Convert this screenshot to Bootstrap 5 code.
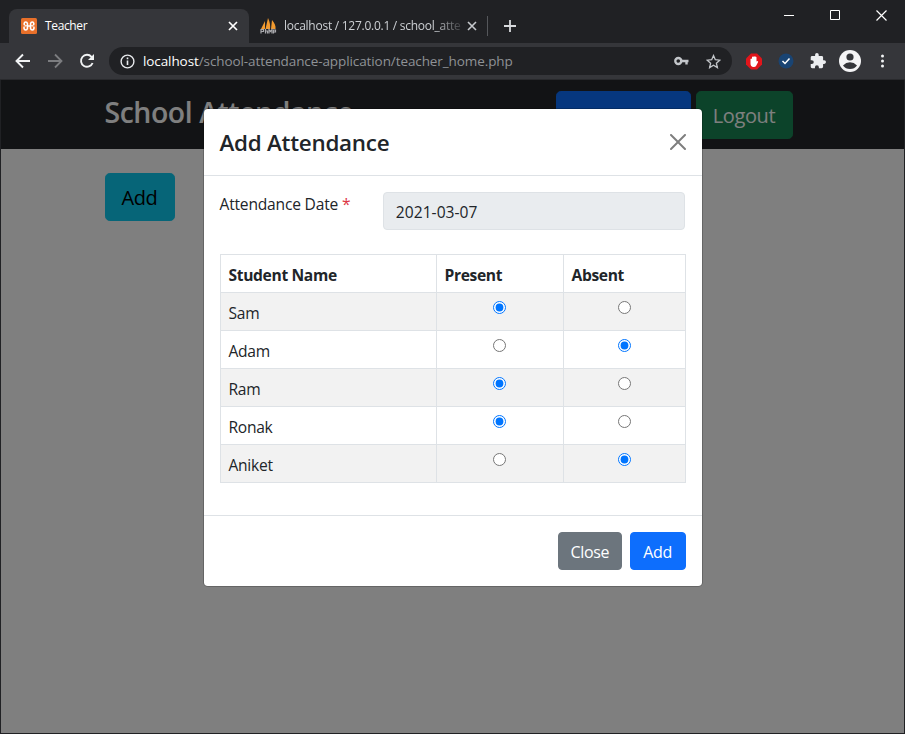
<!DOCTYPE html>
<html lang="en">
<head>
<meta charset="utf-8">
<title>Teacher</title>
<link href="https://cdn.jsdelivr.net/npm/bootstrap@5.3.0/dist/css/bootstrap.min.css" rel="stylesheet">
<style>
body{font-family:"Open Sans","Noto Sans",sans-serif;font-size:16px;width:905px;height:734px;overflow:hidden;background:#202124;letter-spacing:-.025em}
svg{display:block;flex:none}
.tabstrip{height:43px;background:#202124;font-size:12px;letter-spacing:-.03em;padding-left:9px}
.tab-on{width:240px;height:34px;background:#35363a;border-radius:8px 8px 0 0;color:#fff;padding:0 10px 0 12px}
.tab-off{width:238px;height:34px;color:#cdd0d4;padding:0 9px 0 11px}
.tab-label{white-space:nowrap;margin-left:8px}
.tab-off .tab-label{width:177px;overflow:hidden;font-size:12px;letter-spacing:-.022em;margin-left:7px;-webkit-mask-image:linear-gradient(90deg,#000 150px,transparent 182px);mask-image:linear-gradient(90deg,#000 150px,transparent 182px)}
.winctl{padding:10px 18px 0 0;gap:35px}
.toolbar{height:37px;background:#35363a;padding-left:15px;border-bottom:1px solid #292a2d}
.omni{width:623px;height:28px;border-radius:14px;background:#202124;margin-left:14px;padding:0 11px;font-size:13.5px;color:#8f9296;letter-spacing:-.007em}
.omni b{font-weight:400;color:#fff}
.omni span{margin-left:8px}
.omni .star{margin-left:17px}
.ext-stop{margin:0 15px 0 13px}
.who{margin-left:13px}
.dots{margin-left:19px}
.viewport{height:654px;padding:0 1px 1px;position:relative}
.page{height:653px;background:#fff;overflow:hidden}
.topnav{height:69px;background:#24272b;color:#fff;padding:11px 0 10px}
.shell{width:720px;margin:0 auto;padding:0 20px 0 12px}
.brandname{font-size:28.4px;font-weight:600;line-height:42px;letter-spacing:-.015em}
.btn-lg{height:48px;border-radius:4.8px;font-size:20px;padding:9px 16px 7px;white-space:nowrap;letter-spacing:-.02em}
.btn{letter-spacing:-.02em}
.att-link{width:135px;padding:10px 0 6px;text-align:center}
.out-link{width:97px;margin-left:5px}
.add-btn{width:70px}
.shade{inset:0 1px 1px;background:rgba(0,0,0,.5)}
.modal{inset:0;width:auto;height:auto;overflow:hidden}
.modal-dialog{margin-top:28px}
.modal-content{border-radius:4.8px;border-color:rgba(0,0,0,.2)}
.modal-header{height:67px;padding:18px 16px 16px}
.modal-header .btn-close{margin-top:-10px}
.modal-title{font-size:22.4px;font-weight:600;letter-spacing:-.011em}
.modal-body{height:339px;flex:none;padding:16px}
.modal-footer{height:71px;padding:12px}
.modal-footer .btn{height:38px;border-radius:4px;padding:6px 12px 4px}
.w-close{width:64px}.w-add{width:56px}
.date-label{padding-top:1px;font-size:15.6px;letter-spacing:-.013em}
.form-control[readonly]{height:38px;border-radius:4px;background:#e9ecef;color:#212529;font-size:15.6px;letter-spacing:.002em;padding-top:7px;padding-bottom:5px}
.roster{table-layout:fixed;font-size:15.6px;letter-spacing:-.018em;margin:24px 0 0}
.roster th,.roster td{height:38px;padding:8px 8px 0;line-height:24px}
.roster thead th{vertical-align:top;letter-spacing:-.022em}
.roster tbody td:nth-child(n+2){vertical-align:top;padding-top:8px;text-align:center;line-height:0}
.roster input{width:13px;height:13px;margin:0}
.w-name{width:216px}.w-pres{width:127px}
</style>
<script src="https://cdn.jsdelivr.net/npm/bootstrap@5.3.0/dist/js/bootstrap.bundle.min.js"></script>
</head>
<body>
<div class="tabstrip d-flex align-items-end">
  <div class="tab-on d-flex align-items-center">
    <svg width="16" height="16" viewBox="0 0 16 16"><rect width="16" height="16" rx="1.5" fill="#e8702a"/><path d="M5.800 8H10.200M6 8C7 6.500 6.500 4 4.800 4C2.800 4 2.600 7 4.200 7.800C2.300 8.600 2.600 12 4.800 12C6.500 12 7 9.500 6 8M10 8C9 6.500 9.500 4 11.200 4C13.200 4 13.400 7 11.800 7.800C13.700 8.600 13.400 12 11.200 12C9.500 12 9 9.500 10 8" fill="none" stroke="#fff" stroke-width="1.600"/><path d="M1.500 8H4.300M11.700 8H14.500" stroke="#e8702a" stroke-width="1.100"/></svg>
    <span class="tab-label">Teacher</span>
    <svg class="ms-auto" width="12" height="12" viewBox="0 0 12 12"><path d="M2 2L10 10M10 2L2 10" stroke="#fff" stroke-width="1.7"/></svg>
  </div>
  <div class="tab-off d-flex align-items-center">
    <svg width="17" height="16" viewBox="0 0 17 16"><path d="M1 11L5 3V11ZM5.500 11L8 0C10 4 10.500 8 10 11ZM11 11L12 2C14.500 5 16 8 15.500 11Z" fill="#f29a2e"/><path d="M1 15.500V11.500H3.500V13.500H1M5.500 11V15.500M5.500 13H7.500V15.500M9 15.500V11.500L10.500 13.500L12 11.500V15.500M13.500 15.500V12H15.500V14H13.500" fill="none" stroke="#a9a9ad" stroke-width="1.200"/></svg>
    <span class="tab-label">localhost / 127.0.0.1 / school_atte</span>
    <svg class="ms-auto" width="12" height="12" viewBox="0 0 12 12"><path d="M2 2L10 10M10 2L2 10" stroke="#c6c9cd" stroke-width="1.600"/></svg>
  </div>
  <svg width="34" height="34" viewBox="0 0 34 34"><path d="M.5 7V27" stroke="#55575b"/><path d="M17 17H29M23 11V23" stroke="#d8dadd" stroke-width="1.800"/></svg>
  <div class="winctl d-flex align-self-start ms-auto">
    <svg width="11" height="11" viewBox="0 0 11 11"><path d="M0 5.500H10" stroke="#fff"/></svg>
    <svg width="11" height="11" viewBox="0 0 11 11"><path d="M.5 .5H9.500V9.500H.5Z" fill="none" stroke="#fff"/></svg>
    <svg width="11" height="11" viewBox="0 0 11 11"><path d="M.5 .5L10.500 10.500M10.500 .5L.5 10.500" stroke="#fff" stroke-width="1.200"/></svg>
  </div>
</div>
<div class="toolbar d-flex align-items-center">
  <svg width="16" height="16" viewBox="0 0 16 16"><path d="M15 8H2M8 1.500L1.500 8L8 14.500" fill="none" stroke="#f1f3f4" stroke-width="1.900"/></svg>
  <svg class="ms-3" width="16" height="16" viewBox="0 0 16 16"><path d="M1 8H14M8 1.500L14.500 8L8 14.500" fill="none" stroke="#7c7d80" stroke-width="1.800"/></svg>
  <svg class="ms-3" width="16" height="16" viewBox="0 0 16 16"><path d="M13.600 10A6 6 0 1 1 12.500 3.800L14 5.300" fill="none" stroke="#f1f3f4" stroke-width="1.900"/><path d="M15 1V7H9Z" fill="#f1f3f4"/></svg>
  <div class="omni d-flex align-items-center">
    <svg width="15" height="15" viewBox="0 0 15 15"><circle cx="7.500" cy="7.500" r="6.400" fill="none" stroke="#e8eaed" stroke-width="1.400"/><path d="M7.500 6.500V11M7.500 3.600V5.200" stroke="#e8eaed" stroke-width="1.600"/></svg>
    <span><b>localhost</b>/school-attendance-application/teacher_home.php</span>
    <svg class="ms-auto" width="15" height="10" viewBox="0 0 15 10"><circle cx="4.300" cy="5" r="3" fill="none" stroke="#c3c6ca" stroke-width="2.400"/><path d="M7.500 5H14.500M12.500 5V8.500" fill="none" stroke="#c3c6ca" stroke-width="2.400"/></svg>
    <svg class="star" width="15" height="15" viewBox="0 0 24 24"><path d="M12 2.500L14.900 9.200L22 9.900L16.600 14.700L18.200 21.800L12 18L5.800 21.800L7.400 14.700L2 9.900L9.100 9.200Z" fill="none" stroke="#c3c6ca" stroke-width="2.100"/></svg>
  </div>
  <svg class="ext-stop" width="18" height="17" viewBox="-1 -.5 18 17"><path d="M5 0H11L16 5V11L11 16H5L0 11V5Z" fill="#e1151b"/><path d="M4.500 8V5.500Q5.300 4.700 6 5.500V3.500Q6.800 2.600 7.500 3.300Q8.200 2 9 3.300Q10 2.700 10.500 3.800V8L11.500 7.500Q12.500 7.700 12 8.700L10 12.500Q9.500 13.500 7.500 13.400Q4.500 13.400 4.500 10Z" fill="#fff"/></svg>
  <svg width="16" height="16" viewBox="0 0 16 16"><circle cx="8" cy="8" r="7.500" fill="#194473"/><path d="M4.500 8L7 10.500L11.500 5.500" fill="none" stroke="#fff" stroke-width="1.500"/></svg>
  <svg class="ms-3" width="16" height="16" viewBox="1 1 22 22"><path d="M20.500 11H19V7a2 2 0 0 0-2-2h-4V3.500a2.500 2.500 0 0 0-5 0V5H4a2 2 0 0 0-2 2v3.800h1.500a2.700 2.700 0 0 1 0 5.400H2V20a2 2 0 0 0 2 2h3.800v-1.500a2.700 2.700 0 0 1 5.400 0V22H17a2 2 0 0 0 2-2v-4h1.500a2.500 2.500 0 0 0 0-5z" fill="#eceef0"/></svg>
  <svg class="who" width="22" height="22" viewBox="0 0 22 22"><circle cx="11" cy="11" r="11" fill="#f4f4f5"/><circle cx="11" cy="7" r="3.600" fill="#35363a"/><path d="M4 15.500Q7 12.300 11 12.300T18 15.500Q15.500 19 11 19T4 15.500Z" fill="#35363a"/></svg>
  <svg class="dots" width="5" height="14" viewBox="0 0 5 14"><circle cx="2.500" cy="2" r="1.500" fill="#f1f3f4"/><circle cx="2.500" cy="7" r="1.500" fill="#f1f3f4"/><circle cx="2.500" cy="12" r="1.500" fill="#f1f3f4"/></svg>
</div>
<div class="viewport">
  <div class="page">
    <nav class="topnav">
      <div class="shell d-flex">
        <span class="brandname">School Attendance</span>
        <a class="btn btn-primary btn-lg ms-auto att-link">Attendance</a>
        <a class="btn btn-success btn-lg out-link">Logout</a>
      </div>
    </nav>
    <div class="shell pt-4"><button class="btn btn-info btn-lg add-btn">Add</button></div>
  </div>
  <div class="shade position-absolute"></div>
  <div class="modal d-block position-absolute">
    <div class="modal-dialog">
      <div class="modal-content">
        <div class="modal-header">
          <h4 class="modal-title">Add Attendance</h4>
          <button class="btn-close" aria-label="Close"></button>
        </div>
        <div class="modal-body">
          <div class="row">
            <label class="col-4 date-label text-nowrap">Attendance Date <span class="text-danger">*</span></label>
            <div class="col-8"><input class="form-control" value="2021-03-07" readonly></div>
          </div>
          <table class="table table-bordered table-striped roster">
            <thead><tr><th class="w-name">Student Name</th><th class="w-pres">Present</th><th>Absent</th></tr></thead>
            <tbody>
              <tr><td>Sam</td><td><input type="radio" name="s1" checked></td><td><input type="radio" name="s1"></td></tr>
              <tr><td>Adam</td><td><input type="radio" name="s2"></td><td><input type="radio" name="s2" checked></td></tr>
              <tr><td>Ram</td><td><input type="radio" name="s3" checked></td><td><input type="radio" name="s3"></td></tr>
              <tr><td>Ronak</td><td><input type="radio" name="s4" checked></td><td><input type="radio" name="s4"></td></tr>
              <tr><td>Aniket</td><td><input type="radio" name="s5"></td><td><input type="radio" name="s5" checked></td></tr>
            </tbody>
          </table>
        </div>
        <div class="modal-footer">
          <button class="btn btn-secondary w-close">Close</button>
          <button class="btn btn-primary w-add">Add</button>
        </div>
      </div>
    </div>
  </div>
</div>
</body>
</html>
